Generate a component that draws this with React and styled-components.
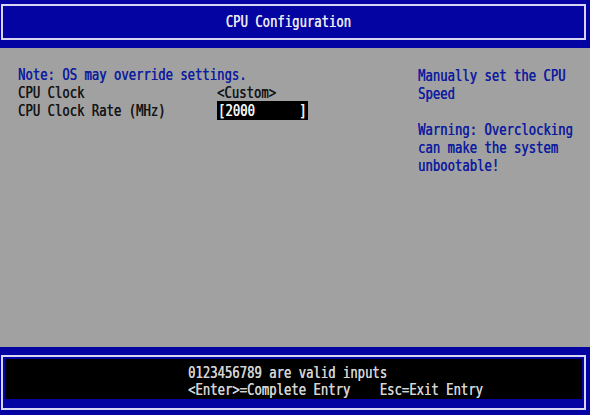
import React from 'react';
import styled, { createGlobalStyle } from 'styled-components';

// Text-mode setup screen, drawn on a 590x415 surface
const BLUE = '#0404a2';
const GRAY = '#a1a1a1';
const FRAME = '#d6d6f2';
const INK_BLUE = '#0e1c9e';

const GlobalStyle = createGlobalStyle`
  html, body {
    margin: 0;
    padding: 0;
    background: ${GRAY};
  }
  body {
    font-family: "DejaVu Sans Mono", "Liberation Mono", monospace;
  }
`;

const Screen = styled.div`
  width: 590px;
  height: 415px;
  display: flex;
  flex-direction: column;
  background: ${GRAY};
  overflow: hidden;
`;

const Header = styled.header`
  height: 48px;
  box-sizing: border-box;
  background: ${BLUE};
  padding: 4px 4px 8px 1px;
`;

const Frame = styled.div`
  height: 100%;
  box-sizing: border-box;
  border: 2px solid ${FRAME};
  display: flex;
  align-items: center;
  justify-content: center;
  padding-right: 11px;
`;

// narrow cell font, like the firmware's 8x16 glyphs
const Line = styled.div`
  font-size: 15.5px;
  line-height: ${p => p.$lh || 18}px;
  font-weight: normal;
  white-space: pre;
  color: ${p => p.$color || '#151515'};
  text-shadow: 0.4px 0 0 ${p => p.$color || '#151515'};
  transform: scaleX(0.79);
  transform-origin: ${p => (p.$center ? 'center' : 'left')} top;
`;

const Body = styled.main`
  flex: 1;
  display: grid;
  grid-template-columns: 199px 201px 1fr;
  padding: 18px 0 0 18px;
`;

const Column = styled.div`
  display: flex;
  flex-direction: column;
  margin-top: ${p => p.$shift || 0}px;
`;

const Spacer = styled.div`
  height: 18px;
`;

const InputBox = styled.div`
  width: 91px;
  height: 19px;
  margin-top: -1px;
  background: #000;
  padding-left: 1px;
  box-sizing: border-box;
  display: flex;
  align-items: center;
`;

const Footer = styled.footer`
  height: 68px;
  box-sizing: border-box;
  background: ${BLUE};
  padding: 8px 4px 5px 1px;
`;

const FooterFrame = styled.div`
  height: 100%;
  box-sizing: border-box;
  border: 2px solid ${FRAME};
  padding: 2px 2px 9px 2px;
`;

const Hints = styled.div`
  height: 100%;
  box-sizing: border-box;
  background: #000;
  padding: 6px 0 0 183px;
`;

export default function App() {
  return (
    <Screen>
      <GlobalStyle />
      <Header>
        <Frame>
          <Line $color="#e8e8ee" $center $lh={18}>CPU Configuration</Line>
        </Frame>
      </Header>

      <Body>
        <Column>
          <Line $color={INK_BLUE}>Note: OS may override settings.</Line>
          <Line>CPU Clock</Line>
          <Line>CPU Clock Rate (MHz)</Line>
        </Column>
        <Column>
          <Spacer />
          <Line>{'<Custom>'}</Line>
          <InputBox>
            <Line $color="#f4f4f4">{'[2000      ]'}</Line>
          </InputBox>
        </Column>
        <Column $shift={1}>
          <Line $color={INK_BLUE}>Manually set the CPU</Line>
          <Line $color={INK_BLUE}>Speed</Line>
          <Spacer />
          <Line $color={INK_BLUE}>Warning: Overclocking</Line>
          <Line $color={INK_BLUE}>can make the system</Line>
          <Line $color={INK_BLUE}>unbootable!</Line>
        </Column>
      </Body>

      <Footer>
        <FooterFrame>
          <Hints>
            <Line $color="#d4d4d4" $lh={17}>0123456789 are valid inputs</Line>
            <Line $color="#d4d4d4" $lh={17}>{'<Enter>=Complete Entry    Esc=Exit Entry'}</Line>
          </Hints>
        </FooterFrame>
      </Footer>
    </Screen>
  );
}
